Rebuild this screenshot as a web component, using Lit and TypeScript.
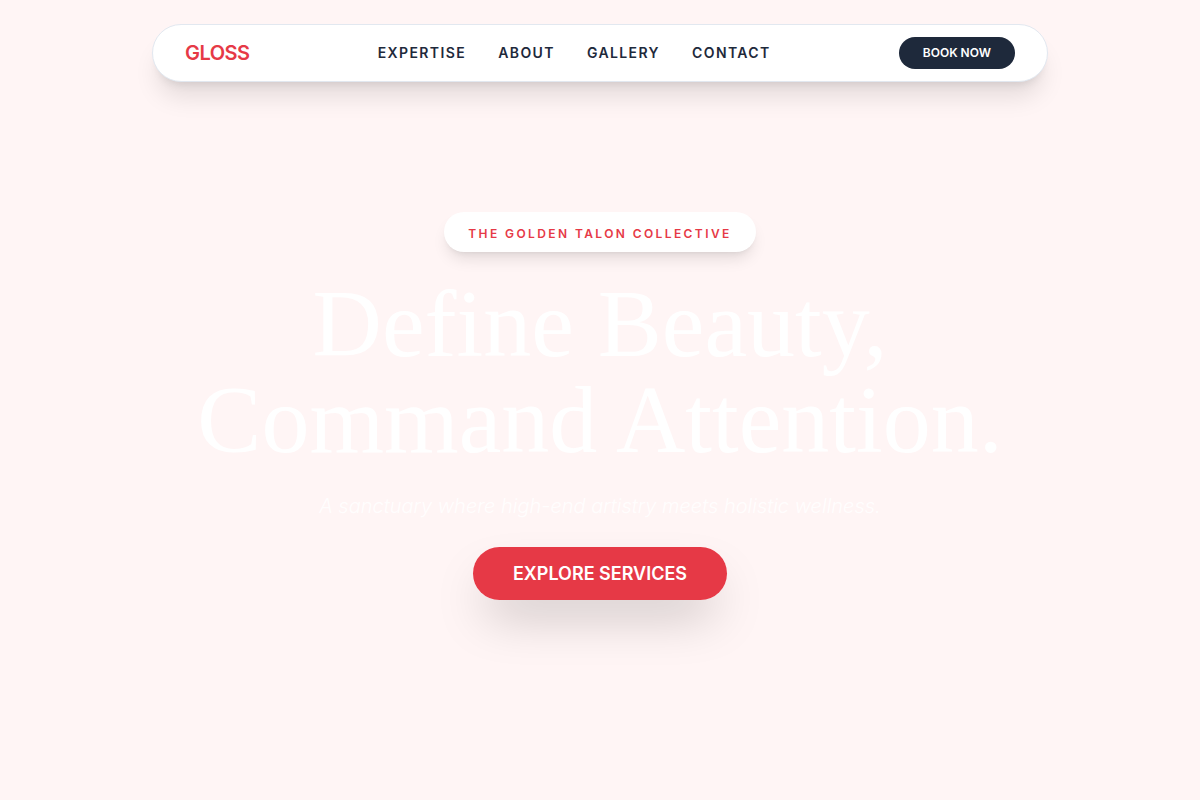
import { LitElement, html, css } from "lit";
import { customElement } from "lit/decorators.js";

@customElement("app-root")
export class AppRoot extends LitElement {
  static styles = css`
    :host {
      display: flex;
      flex-direction: column;
      align-items: center;
      box-sizing: border-box;
      min-height: 100vh;
      padding: 24px 24px 0;
      background: #fff5f5;
      color: #1e293b;
      font-family: Inter, sans-serif;
    }
    .bar {
      box-sizing: border-box;
      width: 100%;
      max-width: 896px;
      display: flex;
      align-items: center;
      justify-content: space-between;
      padding: 12px 32px;
      border: 1px solid #e2e8f0;
      border-radius: 999px;
      background: #fff;
      box-shadow: 0 20px 25px -5px rgba(0, 0, 0, 0.1), 0 8px 10px -6px rgba(0, 0, 0, 0.1);
    }
    a {
      color: inherit;
      text-decoration: none;
    }
    .logo {
      color: #e63946;
      font-size: 20px;
      line-height: 28px;
      font-weight: 600;
      letter-spacing: -0.025em;
    }
    .links {
      display: flex;
      gap: 32px;
      font-size: 14px;
      line-height: 20px;
      font-weight: 600;
      letter-spacing: 0.1em;
    }
    .book {
      border: 0;
      border-radius: 999px;
      padding: 8px 24px;
      background: #1e293b;
      color: #fff;
      font-family: inherit;
      font-size: 12px;
      line-height: 16px;
      font-weight: 600;
      cursor: pointer;
    }
    .hero {
      flex: 1;
      display: flex;
      flex-direction: column;
      align-items: center;
      text-align: center;
      padding: 130px 0 64px;
    }
    .tag {
      padding: 8px 24px;
      border-radius: 999px;
      background: #fff;
      line-height: 24px;
      box-shadow: 0 10px 15px -3px rgba(0, 0, 0, 0.1), 0 4px 6px -4px rgba(0, 0, 0, 0.1);
    }
    .tag-text {
      color: #e63946;
      font-size: 12px;
      line-height: 16px;
      font-weight: 600;
      letter-spacing: 0.2em;
    }
    h1 {
      margin: 24px 0;
      color: #fff;
      font-family: "Liberation Serif", serif;
      font-size: 96px;
      line-height: 96px;
      font-weight: 400;
    }
    .lead {
      margin: 0 0 40px;
      color: rgba(255, 255, 255, 0.9);
      font-size: 20px;
      line-height: 28px;
      font-weight: 300;
      font-style: italic;
    }
    .action {
      font-size: 18px;
      line-height: 28px;
    }
    .cta {
      padding: 16px 40px;
      border-radius: 999px;
      background: #e63946;
      color: #fff;
      font-weight: 600;
      box-shadow: 0 25px 50px -12px rgba(0, 0, 0, 0.25);
    }
  `;

  render() {
    return html`
      <header class="bar">
        <a class="logo" href="#">GLOSS</a>
        <nav class="links">
          <a href="#expertise">EXPERTISE</a>
          <a href="#about">ABOUT</a>
          <a href="#gallery">GALLERY</a>
          <a href="#contact">CONTACT</a>
        </nav>
        <button class="book">BOOK NOW</button>
      </header>
      <main class="hero">
        <div class="tag"><span class="tag-text">THE GOLDEN TALON COLLECTIVE</span></div>
        <h1>Define Beauty,<br />Command Attention.</h1>
        <p class="lead">A sanctuary where high-end artistry meets holistic wellness.</p>
        <div class="action"><a class="cta" href="#expertise">EXPLORE SERVICES</a></div>
      </main>
    `;
  }
}
